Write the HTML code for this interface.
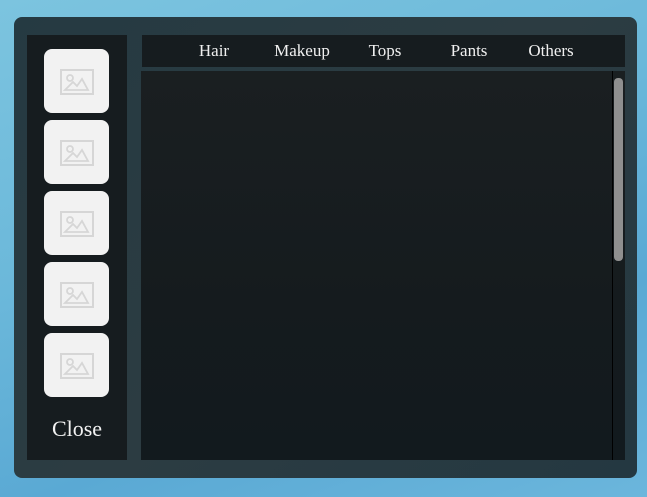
<!DOCTYPE html>
<html><head><meta charset="utf-8"><style>
html,body{margin:0;padding:0}
body{width:647px;height:497px;overflow:hidden;position:relative;background:linear-gradient(160deg,#7cc4df 0%,#6bb8da 40%,#5aa9d4 70%,#6bb6dc 100%);font-family:"Liberation Serif",serif}
.panel{position:absolute;left:14px;top:17px;width:623px;height:461px;border-radius:8px;background:linear-gradient(135deg,#253a42,#2c3c42 50%,#243841);}
.left{position:absolute;left:27px;top:35px;width:100px;height:425px;background:#161c1f}
.btn{position:absolute;left:44px;width:65px;height:64px;border-radius:8px;background:#f2f2f2}
.btn svg{position:absolute;left:16px;top:20px}
.close{position:absolute;left:27px;width:100px;top:416px;text-align:center;color:#f2f2f2;font-size:22px}
.hdr{position:absolute;left:142px;top:35px;width:483px;height:32px;background:#161c1f}
.tab{position:absolute;top:41px;color:#f0f0f0;font-size:17px;transform:translateX(-50%)}
.content{position:absolute;left:141px;top:71px;width:484px;height:389px;background:linear-gradient(180deg,#1a1f21,#151b1e 60%,#121a1e)}
.line{position:absolute;left:612px;top:71px;width:1px;height:389px;background:#000}
.thumb{position:absolute;left:614px;top:78px;width:9px;height:183px;border-radius:4px;background:#8f8f8f}
</style></head><body>
<div class="panel"></div>
<div class="left"></div>
<div class="btn" style="top:49px"><svg width="34" height="26" viewBox="0 0 34 26"><rect x="1" y="1" width="32" height="24" fill="none" stroke="#d6d6d6" stroke-width="2"/><circle cx="10" cy="9" r="3" fill="none" stroke="#d6d6d6" stroke-width="1.8"/><path d="M5 21 L13 13 L17 17 L22 10 L28 21 Z" fill="none" stroke="#d6d6d6" stroke-width="1.8"/></svg></div>
<div class="btn" style="top:120px"><svg width="34" height="26" viewBox="0 0 34 26"><rect x="1" y="1" width="32" height="24" fill="none" stroke="#d6d6d6" stroke-width="2"/><circle cx="10" cy="9" r="3" fill="none" stroke="#d6d6d6" stroke-width="1.8"/><path d="M5 21 L13 13 L17 17 L22 10 L28 21 Z" fill="none" stroke="#d6d6d6" stroke-width="1.8"/></svg></div>
<div class="btn" style="top:191px"><svg width="34" height="26" viewBox="0 0 34 26"><rect x="1" y="1" width="32" height="24" fill="none" stroke="#d6d6d6" stroke-width="2"/><circle cx="10" cy="9" r="3" fill="none" stroke="#d6d6d6" stroke-width="1.8"/><path d="M5 21 L13 13 L17 17 L22 10 L28 21 Z" fill="none" stroke="#d6d6d6" stroke-width="1.8"/></svg></div>
<div class="btn" style="top:262px"><svg width="34" height="26" viewBox="0 0 34 26"><rect x="1" y="1" width="32" height="24" fill="none" stroke="#d6d6d6" stroke-width="2"/><circle cx="10" cy="9" r="3" fill="none" stroke="#d6d6d6" stroke-width="1.8"/><path d="M5 21 L13 13 L17 17 L22 10 L28 21 Z" fill="none" stroke="#d6d6d6" stroke-width="1.8"/></svg></div>
<div class="btn" style="top:333px"><svg width="34" height="26" viewBox="0 0 34 26"><rect x="1" y="1" width="32" height="24" fill="none" stroke="#d6d6d6" stroke-width="2"/><circle cx="10" cy="9" r="3" fill="none" stroke="#d6d6d6" stroke-width="1.8"/><path d="M5 21 L13 13 L17 17 L22 10 L28 21 Z" fill="none" stroke="#d6d6d6" stroke-width="1.8"/></svg></div>
<div class="close">Close</div>
<div class="hdr"></div>
<div class="tab" style="left:214px">Hair</div>
<div class="tab" style="left:302px">Makeup</div>
<div class="tab" style="left:385px">Tops</div>
<div class="tab" style="left:469px">Pants</div>
<div class="tab" style="left:551px">Others</div>
<div class="content"></div>
<div class="line"></div>
<div class="thumb"></div>
</body></html>
